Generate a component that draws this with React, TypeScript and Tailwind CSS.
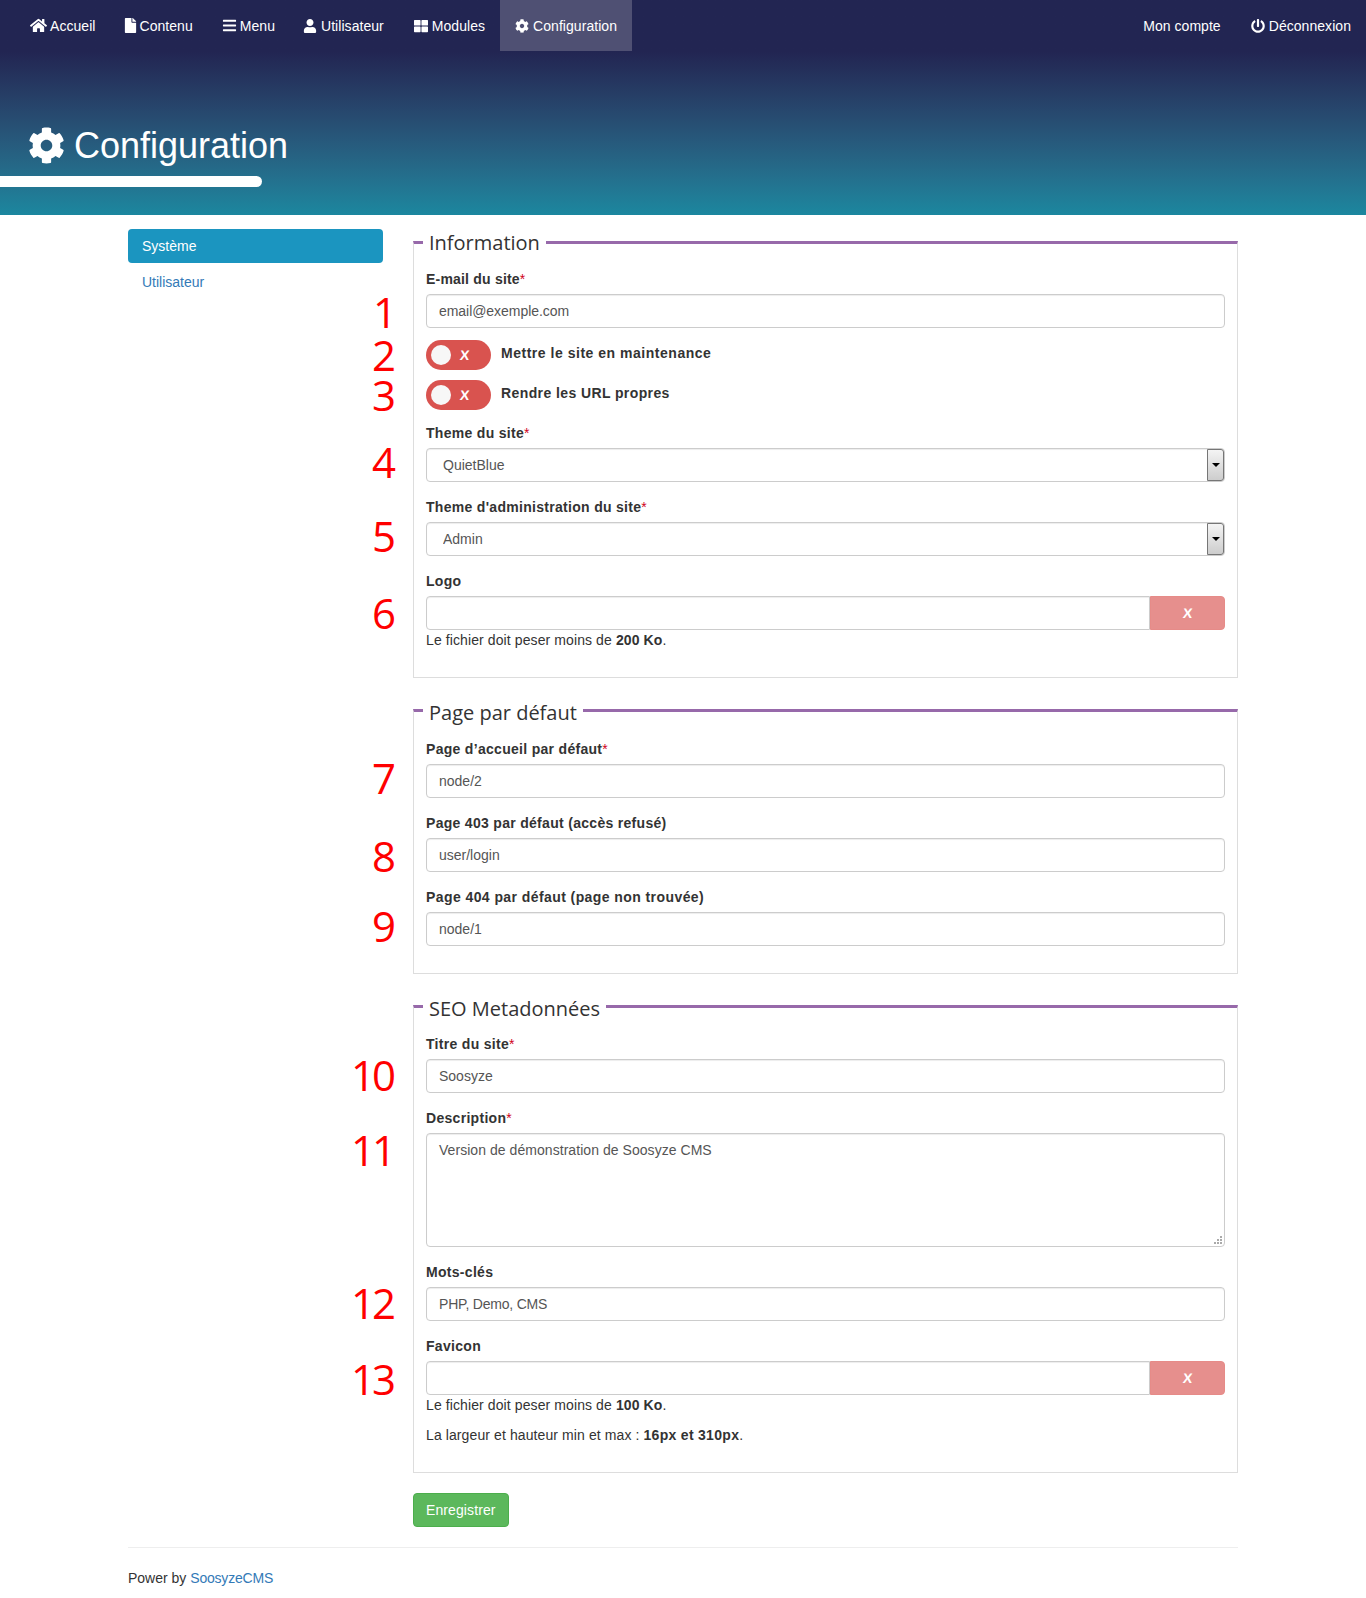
import type { ReactNode } from 'react';
import { FaBars, FaCog, FaFile, FaHome, FaPowerOff, FaThLarge, FaUser } from 'react-icons/fa';

const inputClass =
  'block w-full h-[34px] px-3 rounded border border-[#ccc] bg-white text-sm text-[#555] shadow-[inset_0_1px_1px_rgba(0,0,0,0.075)] outline-none';

const navLinks = [
  { label: 'Accueil', gap: 'gap-[3px]', icon: <FaHome className="text-[17px]" /> },
  { label: 'Contenu', gap: 'gap-px', icon: <FaFile className="text-[15px] -ml-0.5" /> },
  { label: 'Menu', gap: 'gap-[3px]', icon: <FaBars className="text-[15px] -ml-px" /> },
  { label: 'Utilisateur', gap: 'gap-1', icon: <FaUser className="text-sm -ml-0.5" /> },
  { label: 'Modules', gap: 'gap-1', icon: <FaThLarge className="text-sm" /> },
  { label: 'Configuration', gap: 'gap-1', icon: <FaCog className="text-sm" />, active: true },
];

function Num({ value, className = 'top-[2px]' }: { value: number; className?: string }) {
  return (
    <span
      className={`absolute right-full mr-[30px] font-['Open_Sans',sans-serif] text-[42px] leading-[30px] text-[#f00] ${className}`}
    >
      {value}
    </span>
  );
}

function Label({ text, required, className = 'tracking-[0.3px]' }: { text: string; required?: boolean; className?: string }) {
  return (
    <label className={`block h-5 mb-[5px] text-sm leading-5 font-bold text-[#333] ${className}`}>
      {text}
      {required && <span className="font-normal text-[#d0021b]">*</span>}
    </label>
  );
}

function TextField(props: {
  label: string
  value: string
  num: number
  required?: boolean
  numClass?: string
  labelClass?: string
  inputTracking?: string
}) {
  return (
    <div className="mb-[15px]">
      <Label text={props.label} required={props.required} className={props.labelClass} />
      <div className="relative">
        <Num value={props.num} className={props.numClass} />
        <input className={`${inputClass} ${props.inputTracking ?? ''}`} defaultValue={props.value} />
      </div>
    </div>
  );
}

function Toggle(props: { label: string; num: number; className: string; labelTracking: string }) {
  return (
    <div className={`flex items-start ${props.className}`}>
      <div className="relative flex items-center w-[65px] h-[30px] rounded-full bg-[#d9534f] text-white">
        <Num value={props.num} className="top-0" />
        <span className="ml-[5px] w-5 h-5 rounded-full bg-[#f7f7f7]" />
        <span className="inline-block ml-[9px] -skew-x-6 text-sm font-bold leading-none">X</span>
      </div>
      <span className={`ml-[10px] mt-[3px] text-sm leading-5 font-bold text-[#333] ${props.labelTracking}`}>
        {props.label}
      </span>
    </div>
  );
}

function SelectField(props: { label: string; value: string; num: number }) {
  return (
    <div className="mb-[15px]">
      <Label text={props.label} required />
      <div className="relative">
        <Num value={props.num} className="top-[-1px]" />
        <select className={`${inputClass} pl-4 appearance-none`} defaultValue={props.value}>
          <option>{props.value}</option>
        </select>
        <span className="absolute right-px top-px bottom-px w-[17px] flex items-center justify-center rounded-r-[3px] border border-[#767676] bg-gradient-to-b from-[#f4f4f4] to-[#cdcdcd] pointer-events-none">
          <span className="border-x-[4px] border-t-[4px] border-x-transparent border-t-black" />
        </span>
      </div>
    </div>
  );
}

function FileField(props: { label: string; num: number; numClass?: string; children: ReactNode }) {
  return (
    <div className="mb-[15px]">
      <Label text={props.label} />
      <div className="relative flex">
        <Num value={props.num} className={props.numClass} />
        <input className={`${inputClass} flex-1 min-w-0 rounded-r-none`} readOnly />
        <button className="w-[75px] h-[34px] shrink-0 rounded-r border border-[#e68b88] bg-[#e68f8d] text-sm font-bold text-white">
          <span className="inline-block -skew-x-6">X</span>
        </button>
      </div>
      {props.children}
    </div>
  );
}

function Help({ children, className = '' }: { children: ReactNode; className?: string }) {
  return <p className={`text-sm leading-5 text-[#333] tracking-[0.1px] ${className}`}>{children}</p>;
}

function Section(props: { title: string; children: ReactNode; className?: string; bodyClass: string; legendClass: string }) {
  return (
    <fieldset className={`border border-t-[3px] border-[#ddd] border-t-[#9769aa] px-3 pb-3 min-w-0 ${props.className ?? ''}`}>
      <legend className={`-ml-[3px] px-1.5 h-[30px] font-['Open_Sans',sans-serif] text-[20px] text-[#333] ${props.legendClass}`}>
        {props.title}
      </legend>
      <div className={props.bodyClass}>{props.children}</div>
    </fieldset>
  );
}

export default function App() {
  return (
    <div className="min-h-screen bg-white font-['Liberation_Sans',Arial,sans-serif] text-sm text-[#333]">
      <header className="h-[215px] bg-gradient-to-b from-[#222552] from-[24%] to-[#1b879f] text-white">
        <nav className="flex justify-between h-[51px] pl-[15px] tracking-[0.05px]">
          <ul className="flex">
            {navLinks.map((l) => (
              <li key={l.label}>
                <a className={`flex items-center h-[51px] px-[15px] ${l.gap} ${l.active ? 'bg-[#4f5073]' : ''}`}>
                  {l.icon}
                  {l.label}
                </a>
              </li>
            ))}
          </ul>
          <ul className="flex">
            <li>
              <a className="flex items-center h-[51px] px-[15px]">Mon compte</a>
            </li>
            <li>
              <a className="flex items-center gap-1 h-[51px] px-[15px]">
                <FaPowerOff className="text-sm" />
                Déconnexion
              </a>
            </li>
          </ul>
        </nav>
        <div className="flex items-center gap-[9px] mt-[72px] pl-[28px] h-[46px]">
          <FaCog className="text-[37px] -mt-[2px]" />
          <h1 className="text-4xl leading-[46px]">Configuration</h1>
        </div>
        <div className="w-[262px] h-[11px] mt-[7px] rounded-r-full bg-white" />
      </header>

      <main className="w-[1110px] mx-auto pt-[14px] flex gap-[30px]">
        <aside className="w-[255px] shrink-0">
          <a className="flex items-center h-[34px] px-[14px] rounded bg-[#1b95c0] text-white">Système</a>
          <a className="flex items-center h-[34px] mt-0.5 px-[14px] text-[#337ab7]">Utilisateur</a>
        </aside>

        <form className="flex-1 min-w-0 -mt-[2px]">
          <Section title="Information" bodyClass="pt-[12px]" legendClass="leading-[32px]">
            <TextField
              label="E-mail du site"
              required
              value="email@exemple.com"
              num={1}
              labelClass="tracking-[0.2px]"
              inputTracking="tracking-[-0.05px]"
              numClass="top-[3px] translate-x-px"
            />
            <Toggle
              label="Mettre le site en maintenance"
              num={2}
              className="-mt-[3px] mb-[10px]"
              labelTracking="tracking-[0.52px]"
            />
            <Toggle label="Rendre les URL propres" num={3} className="mb-[13px]" labelTracking="tracking-[0.4px]" />
            <SelectField label="Theme du site" value="QuietBlue" num={4} />
            <SelectField label="Theme d'administration du site" value="Admin" num={5} />
            <FileField label="Logo" num={6}>
              <Help>
                Le fichier doit peser moins de <b>200 Ko</b>.
              </Help>
            </FileField>
          </Section>

          <Section title="Page par défaut" className="mt-[17px]" bodyClass="pt-[14px]" legendClass="leading-[35px]">
            <TextField label="Page d’accueil par défaut" required value="node/2" num={7} numClass="top-[-1px]" />
            <TextField label="Page 403 par défaut (accès refusé)" value="user/login" num={8} numClass="top-[3px]" />
            <TextField
              label="Page 404 par défaut (page non trouvée)"
              value="node/1"
              num={9}
              labelClass="tracking-[0.42px]"
              numClass="top-[-1px]"
            />
          </Section>

          <Section title="SEO Metadonnées" className="mt-[17px]" bodyClass="pt-[13px]" legendClass="leading-[35px]">
            <TextField
              label="Titre du site"
              required
              value="Soosyze"
              num={10}
              numClass="top-[1px] tracking-[-3px] -translate-x-[3px]"
            />
            <div className="mb-[15px]">
              <Label text="Description" required />
              <div className="relative">
                <Num value={11} className="top-[2px] tracking-[-3px] -translate-x-[3px]" />
                <textarea
                  className="block w-full h-[114px] px-3 py-1.5 rounded border border-[#ccc] bg-white text-sm leading-5 text-[#555] tracking-[0.05px] shadow-[inset_0_1px_1px_rgba(0,0,0,0.075)] outline-none resize-none"
                  defaultValue="Version de démonstration de Soosyze CMS"
                />
                <svg className="absolute right-[3px] bottom-[3px] w-2 h-2 fill-[#aaa]" viewBox="0 0 8 8">
                  <rect x="6" y="0" width="2" height="2" />
                  <rect x="3" y="3" width="2" height="2" />
                  <rect x="6" y="3" width="2" height="2" />
                  <rect x="0" y="6" width="2" height="2" />
                  <rect x="3" y="6" width="2" height="2" />
                  <rect x="6" y="6" width="2" height="2" />
                </svg>
              </div>
            </div>
            <TextField
              label="Mots-clés"
              value="PHP, Demo, CMS"
              num={12}
              inputTracking="tracking-[-0.2px]"
              numClass="top-[1px] tracking-[-3px] -translate-x-[3px]"
            />
            <FileField label="Favicon" num={13} numClass="top-[3px] tracking-[-3px] -translate-x-[3px]">
              <Help className="mb-2.5">
                Le fichier doit peser moins de <b>100 Ko</b>.
              </Help>
              <Help>
                La largeur et hauteur min et max : <b className="tracking-[0.3px]">16px et 310px</b>.
              </Help>
            </FileField>
          </Section>

          <button className="block mt-5 h-[34px] px-3 rounded border border-[#4cae4c] bg-[#5cb85c] text-white tracking-[0.1px]">
            Enregistrer
          </button>
        </form>
      </main>

      <footer className="w-[1110px] mx-auto mt-5 pt-5 pb-2.5 border-t border-[#eee] leading-5">
        Power by <a className="text-[#337ab7] tracking-[-0.2px]">SoosyzeCMS</a>
      </footer>
    </div>
  );
}
